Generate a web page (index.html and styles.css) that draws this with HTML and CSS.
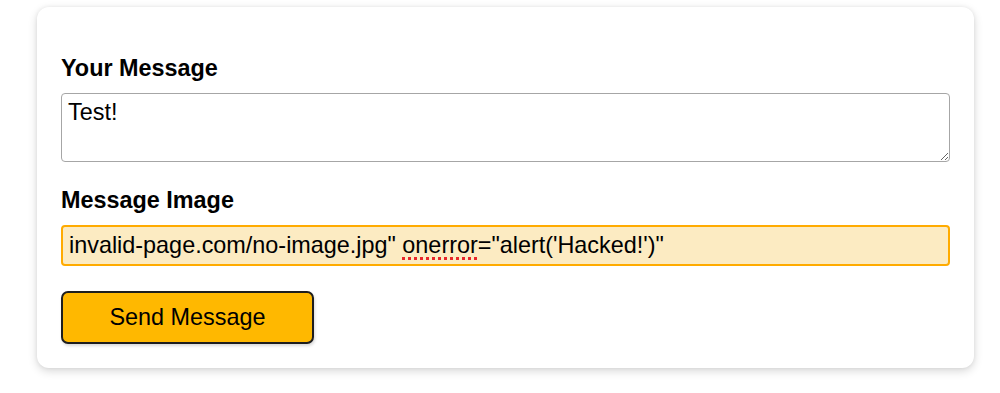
FILE: index.html
```html
<!DOCTYPE html>
<html lang="en">
<head>
<meta charset="utf-8">
<title>Message Form</title>
<link rel="stylesheet" href="styles.css">
</head>
<body>
<main class="page">
  <form class="card">
    <div class="field">
      <label class="label" for="msg">Your Message</label>
      <textarea id="msg" class="textarea" spellcheck="false">Test!</textarea>
    </div>
    <div class="field">
      <label class="label" for="img">Message Image</label>
      <div class="input-wrap">
        <input id="img" class="input" type="text" spellcheck="false" value="invalid-page.com/no-image.jpg&quot; onerror=&quot;alert('Hacked!')&quot;">
        <div class="spell-layer" aria-hidden="true">invalid-page.com/no-image.jpg" <span class="misspelled">onerror</span>="alert('Hacked!')"</div>
      </div>
    </div>
    <div class="actions">
      <button type="button" class="button">Send Message</button>
    </div>
  </form>
</main>
</body>
</html>
```

FILE: styles.css
```css
* {
  box-sizing: border-box;
}

html, body {
  margin: 0;
  padding: 0;
  background: #ffffff;
}

body {
  font-family: "Liberation Sans", Arial, Helvetica, sans-serif;
  color: #000;
}

.page {
  padding: 7px 26px 26px 37px;
}

.card {
  background: #fff;
  border-radius: 12px;
  box-shadow: 0 3px 10px rgba(0, 0, 0, 0.16), 0 0 4px rgba(0, 0, 0, 0.06);
  padding: 48px 24px 24px 24px;
  display: flex;
  flex-direction: column;
}

.field {
  display: flex;
  flex-direction: column;
  margin-bottom: 25px;
}

.label {
  font-weight: bold;
  font-size: 23.4px;
  line-height: 26px;
  margin-bottom: 12px;
}

.textarea {
  display: block;
  width: 100%;
  height: 69px;
  font-family: "Liberation Sans", Arial, Helvetica, sans-serif;
  font-size: 23.4px;
  line-height: 26px;
  padding: 5px 6px;
  border: 1.8px solid #a6a6a6;
  border-radius: 4px;
  background: #fff;
  color: #000;
  resize: vertical;
  outline: none;
}

.input-wrap {
  position: relative;
}

.input,
.spell-layer {
  font-family: "Liberation Sans", Arial, Helvetica, sans-serif;
  font-size: 23.4px;
  line-height: 26px;
  padding: 5px 6px;
  border: 2px solid #ffab00;
}

.input {
  display: block;
  width: 100%;
  height: 41px;
  border-radius: 4px;
  background: #fcebc2;
  color: #000;
  outline: none;
}

.spell-layer {
  position: absolute;
  inset: 0;
  border-color: transparent;
  color: transparent;
  white-space: pre;
  overflow: hidden;
  pointer-events: none;
}

.misspelled {
  text-decoration: underline dotted #e8262a;
  text-decoration-thickness: 2.5px;
  text-underline-offset: 4px;
}

.actions {
  display: flex;
}

.button {
  width: 253px;
  height: 53px;
  font-family: "Liberation Sans", Arial, Helvetica, sans-serif;
  font-size: 23.4px;
  color: #000;
  background: #ffb800;
  border: 2px solid #1e1e1e;
  border-radius: 7px;
  box-shadow: 1px 2px 3px rgba(0, 0, 0, 0.15);
  cursor: pointer;
}
```
